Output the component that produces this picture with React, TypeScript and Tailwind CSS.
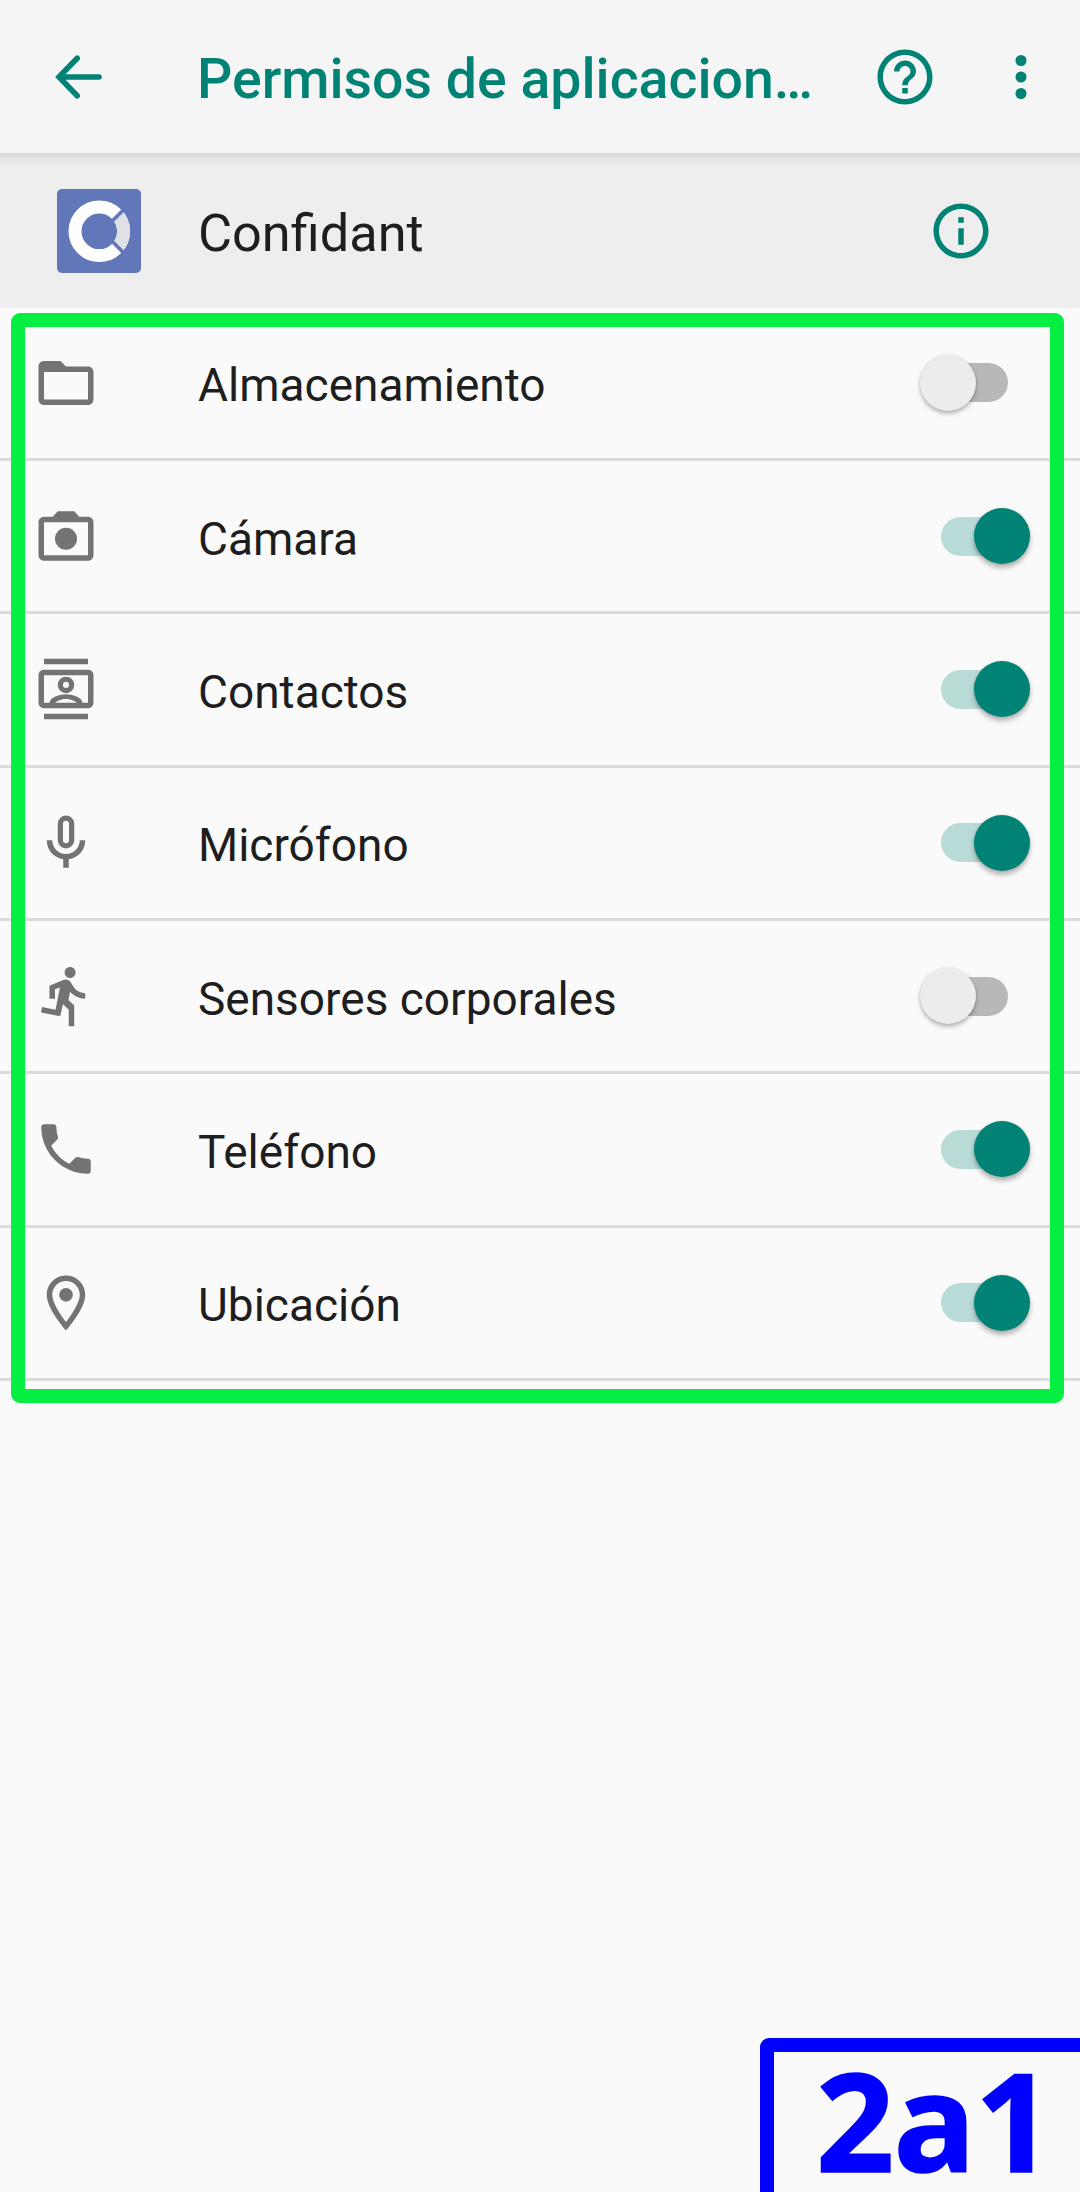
import type { ReactNode } from "react";

function Icon({ children, className = "" }: { children: ReactNode; className?: string }) {
  return (
    <svg viewBox="0 0 24 24" fill="currentColor" className={`block h-[66px] w-[66px] shrink-0 ${className}`}>
      {children}
    </svg>
  );
}

const folder = (
  <path
    fillRule="evenodd"
    d="M10 4H4c-1.1 0-2 .9-2 2v12c0 1.1.9 2 2 2h16c1.1 0 2-.9 2-2V8c0-1.1-.9-2-2-2h-8zM4 8h16v10H4z"
  />
);
const camera = (
  <>
    <path
      fillRule="evenodd"
      d="M20 5h-3.17L15 3H9L7.17 5H4c-1.1 0-2 .9-2 2v12c0 1.1.9 2 2 2h16c1.1 0 2-.9 2-2V7c0-1.1-.9-2-2-2zM4 7h16v12H4z"
    />
    <circle cx="12" cy="13" r="4" />
  </>
);
const contacts = (
  <>
    <path d="M4 1h16v2H4zM4 21h16v2H4z" />
    <path
      fillRule="evenodd"
      d="M20 5H4c-1.1 0-2 .9-2 2v10c0 1.1.9 2 2 2h16c1.1 0 2-.9 2-2V7c0-1.1-.9-2-2-2zM4 7h16v10H4z"
    />
    <circle cx="12" cy="10.5" r="2.05" fill="none" stroke="currentColor" strokeWidth="1.9" />
    <path d="M6 17.2c0-2 3.2-3.3 6-3.3s6 1.3 6 3.3h-2c-.7-1-2.4-1.6-4-1.6s-3.3.6-4 1.6z" />
  </>
);
const mic = (
  <>
    <rect x="9.95" y="2.95" width="4.1" height="10.1" rx="2.05" fill="none" stroke="currentColor" strokeWidth="1.9" />
    <path d="M17 11c0 2.76-2.24 5-5 5s-5-2.24-5-5H5c0 3.53 2.61 6.43 6 6.92V21h2v-3.08c3.39-.49 6-3.39 6-6.92z" />
  </>
);
const run = (
  <path d="M13.49 5.48c1.1 0 2-.9 2-2s-.9-2-2-2-2 .9-2 2 .9 2 2 2zm-3.6 13.9l1-4.4 2.1 2v6h2v-7.5l-2.1-2 .6-3c1.3 1.5 3.3 2.5 5.5 2.5v-2c-1.9 0-3.5-1-4.3-2.4l-1-1.6c-.4-.6-1-1-1.7-1-.3 0-.5.1-.8.1l-5.2 2.2v4.7h2v-3.4l1.8-.7-1.6 8.1-4.9-1-.4 2 7 1.4z" />
);
const phone = (
  <path d="M6.62 10.79c1.44 2.83 3.76 5.14 6.59 6.59l2.2-2.2c.27-.27.67-.36 1.02-.24 1.12.37 2.33.57 3.57.57.55 0 1 .45 1 1V20c0 .55-.45 1-1 1-9.39 0-17-7.61-17-17 0-.55.45-1 1-1h3.5c.55 0 1 .45 1 1 0 1.25.2 2.45.57 3.57.11.35.03.74-.25 1.02l-2.2 2.2z" />
);
const place = (
  <>
    <path d="M12 2C8.13 2 5 5.13 5 9c0 5.25 7 13 7 13s7-7.75 7-13c0-3.87-3.13-7-7-7zM7 9c0-2.76 2.24-5 5-5s5 2.24 5 5c0 2.88-2.88 7.19-5 9.88C9.92 16.21 7 11.85 7 9z" />
    <circle cx="12" cy="9" r="2.5" />
  </>
);

const permissions = [
  { label: "Almacenamiento", icon: folder, on: false },
  { label: "Cámara", icon: camera, on: true },
  { label: "Contactos", icon: contacts, on: true },
  { label: "Micrófono", icon: mic, on: true },
  { label: "Sensores corporales", icon: run, on: false },
  { label: "Teléfono", icon: phone, on: true },
  { label: "Ubicación", icon: place, on: true },
];

function Toggle({ on }: { on: boolean }) {
  return on ? (
    <span className="mr-[50px] flex items-center" role="switch" aria-checked="true">
      <span className="h-[39px] w-[66px] rounded-l-full bg-[#b8dbd7]" />
      <span className="-ml-[33px] h-[56px] w-[56px] rounded-full bg-[#008375] shadow-[0_4px_5px_rgba(0,0,0,0.28),0_0_3px_rgba(0,0,0,0.12)]" />
    </span>
  ) : (
    <span className="mr-[72px] flex items-center" role="switch" aria-checked="false">
      <span className="z-1 -mr-[33px] h-[56px] w-[56px] rounded-full bg-[#ececec] shadow-[0_3px_4px_rgba(0,0,0,0.26),0_0_3px_rgba(0,0,0,0.1)]" />
      <span className="h-[39px] w-[65px] rounded-r-full bg-[#b8b8b8]" />
    </span>
  );
}

function Logo() {
  return (
    <svg viewBox="0 0 84 84" className="block h-[84px] w-[84px]">
      <rect width="84" height="84" rx="5" fill="#6277ba" />
      <circle cx="42.3" cy="42.3" r="24.3" fill="none" stroke="#fff" strokeWidth="13" />
      <path d="M60.4 26.1A24.3 24.3 0 0 1 60.4 58.5" fill="none" stroke="#dfe1e4" strokeWidth="13" />
      <path d="M54 33.3 67.8 19.5M54 51.3 67.8 65.1" stroke="#6277ba" strokeWidth="3.6" />
    </svg>
  );
}

export default function App() {
  return (
    <div className="relative flex h-[2192px] w-[1080px] flex-col overflow-hidden bg-[#fafafa] font-['Roboto',sans-serif] text-[#1e1e1e]">
      <header className="flex h-[153px] shrink-0 items-center bg-[#f5f5f5] text-[#008375]">
        <svg viewBox="0 0 66 66" className="ml-[45px] block h-[66px] w-[66px]" fill="none" stroke="currentColor" strokeWidth="5.6" strokeLinecap="round">
          <path d="M32.2 14.2 14 33l18.2 18.8M15 33h39" />
        </svg>
        <h1 className="ml-[86px] w-[640px] pt-[7px] text-[55.4px] leading-[64px] font-medium whitespace-nowrap">
          Permisos de aplicacion…
        </h1>
        <Icon className="ml-[35px]">
          <path d="M11 18h2v-2h-2v2zm1-16C6.48 2 2 6.48 2 12s4.48 10 10 10 10-4.48 10-10S17.52 2 12 2zm0 18c-4.41 0-8-3.59-8-8s3.59-8 8-8 8 3.59 8 8-3.59 8-8 8zm0-14c-2.21 0-4 1.79-4 4h2c0-1.1.9-2 2-2s2 .9 2 2c0 2-3 1.75-3 5h2c0-2.25 3-2.5 3-5 0-2.21-1.79-4-4-4z" />
        </Icon>
        <Icon className="ml-[50px]">
          <circle cx="12" cy="6" r="2" />
          <circle cx="12" cy="12" r="2" />
          <circle cx="12" cy="18" r="2" />
        </Icon>
      </header>

      <section className="flex h-[155px] shrink-0 items-center border-t border-[#d8d8d8] bg-[#eeeeee] bg-[linear-gradient(to_bottom,#d6d6d6_0px,#e2e2e2_4px,#eaeaea_8px,#eeeeee_13px)]">
        <div className="ml-[57px]">
          <Logo />
        </div>
        <h2 className="ml-[57px] flex-1 pt-[3px] text-[52.3px] leading-[58px]">Confidant</h2>
        <Icon className="mr-[86px] text-[#008375]">
          <path d="M11 7h2v2h-2zm0 4h2v6h-2zm1-9C6.48 2 2 6.48 2 12s4.48 10 10 10 10-4.48 10-10S17.52 2 12 2zm0 18c-4.41 0-8-3.59-8-8s3.59-8 8-8 8 3.59 8 8-3.59 8-8 8z" />
        </Icon>
      </section>

      <ul className="-mt-[0.33px] shrink-0">
        {permissions.map((p) => (
          <li key={p.label} className="flex h-[153.33px] items-center border-b-3 border-[#dcdcdc]">
            <Icon className="ml-[33px] text-[#737373]">{p.icon}</Icon>
            <span className="ml-[99px] flex-1 pt-[5px] text-[46px] leading-[54px]">{p.label}</span>
            <Toggle on={p.on} />
          </li>
        ))}
      </ul>

      <div className="pointer-events-none absolute top-[313px] left-[11px] h-[1090px] w-[1053px] rounded-[9px] border-14 border-[#05ef43]" />

      <div className="absolute top-[2038px] left-[760px] h-[180px] w-[340px] rounded-[9px] border-14 border-[#0000ff]" />
      <div className="absolute top-[2049px] left-[816px] font-['Open_Sans',sans-serif] text-[137px] leading-[140px] font-bold tracking-[-1px] text-[#0000ff] [-webkit-text-stroke:1.5px_#0000ff]">
        2a1
      </div>
    </div>
  );
}
